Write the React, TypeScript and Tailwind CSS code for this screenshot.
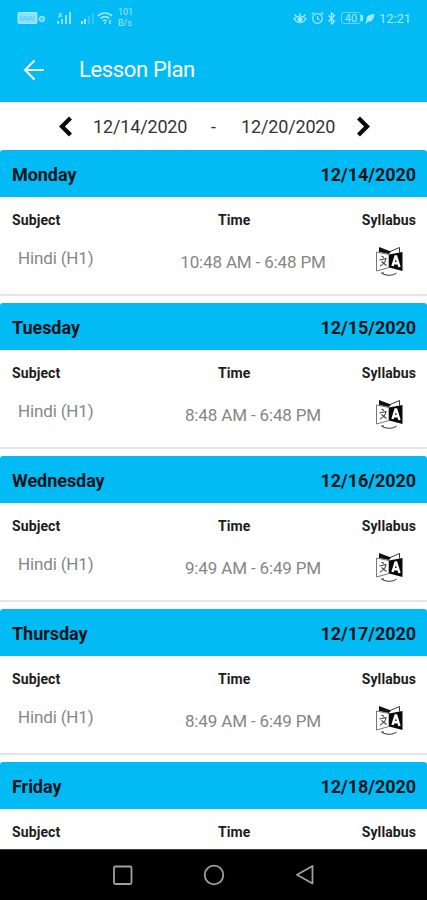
type Lesson = { subject: string; time: string };

type Day = { day: string; date: string; lessons: Lesson[] };

const days: Day[] = [
  { day: "Monday", date: "12/14/2020", lessons: [{ subject: "Hindi (H1)", time: "10:48 AM - 6:48 PM" }] },
  { day: "Tuesday", date: "12/15/2020", lessons: [{ subject: "Hindi (H1)", time: "8:48 AM - 6:48 PM" }] },
  { day: "Wednesday", date: "12/16/2020", lessons: [{ subject: "Hindi (H1)", time: "9:49 AM - 6:49 PM" }] },
  { day: "Thursday", date: "12/17/2020", lessons: [{ subject: "Hindi (H1)", time: "8:49 AM - 6:49 PM" }] },
  { day: "Friday", date: "12/18/2020", lessons: [] },
];

export default function App() {
  return (
    <div className="flex h-[900px] w-[427px] flex-col overflow-hidden bg-white font-[Roboto,sans-serif] text-black">
      <header className="h-[102px] shrink-0 bg-[#02bbf4] text-white">
        <StatusBar />
        <div className="flex h-[66px] items-center pt-[2px] pl-[23px]">
          <svg width="22" height="22" viewBox="0 0 22 22" fill="none" stroke="currentColor" strokeWidth="2">
            <path d="M21 11H2M11.5 1.5 2 11l9.5 9.5" />
          </svg>
          <h1 className="ml-[34px] text-[22px] leading-none tracking-[-0.35px]">Lesson Plan</h1>
        </div>
      </header>

      <div className="flex h-[48px] shrink-0 items-center pt-px text-[18px] tracking-[-0.15px] text-[#333]">
        <Chevron className="ml-[58px]" d="M12.5 2 4 10.5l8.5 8.5" />
        <span className="ml-[20px] w-[95px]">12/14/2020</span>
        <span className="ml-[23px] w-[8px]">-</span>
        <span className="ml-[22px] w-[95px]">12/20/2020</span>
        <Chevron className="ml-[19px]" d="m3.5 2 8.5 8.5L3.5 19" />
      </div>

      <main className="min-h-0 flex-1 overflow-hidden">
        {days.map((item) => (
          <DayCard key={item.day} {...item} />
        ))}
      </main>

      <NavBar />
    </div>
  );
}

function DayCard({ day, date, lessons }: Day) {
  return (
    <section className="mb-[7.1px] h-[146px] overflow-hidden rounded-t-[3px] border-b-2 border-[#e3e5e6] bg-white">
      <div className="flex h-[47px] items-center justify-between bg-[#02bbf4] pt-[2px] pr-[11px] pl-[12px] text-[18px] font-bold tracking-[-0.05px] text-[#08161c]">
        <span>{day}</span>
        <span>{date}</span>
      </div>
      <div className="grid grid-cols-[206px_33px_1fr] pt-[13px] pr-[11px] pl-[12px] text-[14px] leading-[20px] font-bold tracking-[0.1px] text-[#1c1c1c]">
        <span>Subject</span>
        <span>Time</span>
        <span className="text-right">Syllabus</span>
      </div>
      {lessons.map((lesson) => (
        <div
          key={lesson.time}
          className="grid grid-cols-[150px_170px_1fr] pt-[15px] pr-[24px] pl-[18px] text-[17px] leading-[26px] tracking-[-0.15px] text-[#868686]"
        >
          <span>{lesson.subject}</span>
          <span className="pt-[4px] text-center whitespace-nowrap">{lesson.time}</span>
          <TranslateIcon />
        </div>
      ))}
    </section>
  );
}

function Chevron({ className, d }: { className: string; d: string }) {
  return (
    <svg className={className} width="15" height="21" viewBox="0 0 15 21" fill="none" stroke="#0a0a0a" strokeWidth="4.2">
      <path d={d} />
    </svg>
  );
}

function TranslateIcon() {
  return (
    <svg className="justify-self-end" width="28" height="32" viewBox="0 0 28 32" fill="none" stroke="#222">
      <path d="m14 7 10.500-4.500v5" strokeWidth=".9" />
      <path d="M4 2 16 6.500 14 9 4 7Z" fill="#111" stroke="none" />
      <path d="M1.500 7 14 9.500v13L1.500 26Z" fill="#fff" stroke="#666" strokeWidth=".9" />
      <path d="M14 9.500 27.500 7v19L14 22.500Z" fill="#0a0a0a" stroke="none" />
      <path d="m17.500 21 3-9.500h.7l3.300 10.500m-6-3.700h5" stroke="#fff" strokeWidth="2.400" />
      <path d="m6.500 11 2.500 1.500M4.500 15l6.500-1.500c-.5 4-3 6-6 7.500M6.500 16.500l5 4" stroke="#444" strokeWidth="1.100" />
      <path d="M6.500 28c4 3 11.500 3 15 0M6.500 28h2.500" stroke="#333" strokeWidth="1" />
    </svg>
  );
}

function StatusBar() {
  return (
    <div className="flex h-[36px] items-center text-[#a5e8fb]">
      <svg className="ml-[17px]" width="29" height="14" viewBox="0 0 29 14" fill="none" stroke="currentColor">
        <rect x="1" y="1.500" width="19" height="11" rx="1" fill="currentColor" fillOpacity=".85" />
        <path d="M4 5v4h3V5m2 0v4h3V5m2 0v4h3V5" stroke="#4fcdf4" />
        <circle cx="25" cy="8" r="2.800" fill="currentColor" fillOpacity=".5" />
      </svg>
      <svg className="ml-[10px]" width="16" height="14" viewBox="0 0 16 14" fill="currentColor">
        <path d="M1 10h2v3H1zM5 8h2v5H5zM9 4h2v9H9zM13 1h2v12h-2zM3 1l2 2 2-1-2 3 2 1-3 0-2 1 1-3z" fillOpacity=".85" />
      </svg>
      <svg className="ml-[8px]" width="15" height="14" viewBox="0 0 15 14" fill="currentColor">
        <path d="M1 10h2v3H1zM4 8h2v5H4z" />
        <path d="M8 5h2v8H8zM12 2h2v11h-2z" fillOpacity=".3" />
      </svg>
      <svg className="ml-[2px]" width="16" height="14" viewBox="0 0 16 14" fill="none" stroke="currentColor" strokeWidth="1.500">
        <path d="M1 5c4-4 10-4 14 0M3.500 7.500c3-2.500 6-2.500 9 0M6 10c1.500-1 2.500-1 4 0" />
        <circle cx="8" cy="12" r="1" fill="currentColor" stroke="none" />
        <path d="M13 9v4" />
      </svg>
      <div className="ml-[5px] w-[16px] text-[9px] leading-[11px]">
        <div>101</div>
        <div>B/s</div>
      </div>
      <svg className="ml-[159px]" width="14" height="13" viewBox="0 0 14 13" fill="none" stroke="currentColor" strokeWidth="1.200">
        <path d="M1 7c3.500-4 8.500-4 12 0-3.500 5-8.500 5-12 0ZM1.500 2.500l2 2M7 1v3M12.500 2.500l-2 2" />
        <circle cx="7" cy="7.500" r="2" fill="currentColor" />
      </svg>
      <svg className="ml-[4px]" width="13" height="14" viewBox="0 0 13 14" fill="none" stroke="currentColor" strokeWidth="1.200">
        <circle cx="6.500" cy="7.500" r="4.800" />
        <path d="M6.500 5v3l2 1M.800 3.500 3 1.500m9.200 2-2.200-2" />
      </svg>
      <svg className="ml-[3px]" width="9" height="13" viewBox="0 0 9 13" fill="none" stroke="currentColor" strokeWidth="1.300">
        <path d="m1.500 3.500 6 6-3 2.500V1l3 2.500-6 6" />
      </svg>
      <div className="ml-[5px] flex h-[12px] w-[20px] items-center justify-center rounded-[3px] border border-[#68d7f7] text-[11px] leading-none">
        40
      </div>
      <span className="h-[6px] w-[2px] bg-[#a5e8fb]" />
      <svg className="ml-[2px]" width="10" height="11" viewBox="0 0 10 11" fill="currentColor">
        <path d="M9.500 1C5 1 1 3 1.500 7L.500 10l1 .500 1.500-2C7 9 9 5.500 9.500 1Z" />
      </svg>
      <span className="ml-[4px] pt-px text-[13px] leading-none tracking-[-0.1px]">12:21</span>
    </div>
  );
}

function NavBar() {
  return (
    <nav className="h-[51px] shrink-0 border-t border-[#444] bg-black">
      <svg width="427" height="50" viewBox="0 0 427 50" fill="none" stroke="#a0a0a0" strokeWidth="1.800">
        <rect x="114" y="16.500" width="17.500" height="17.500" rx="1.500" />
        <circle cx="214" cy="25" r="9.300" />
        <path d="M312.500 16v17.500l-15.500-8.700Z" strokeLinejoin="round" />
      </svg>
    </nav>
  );
}
